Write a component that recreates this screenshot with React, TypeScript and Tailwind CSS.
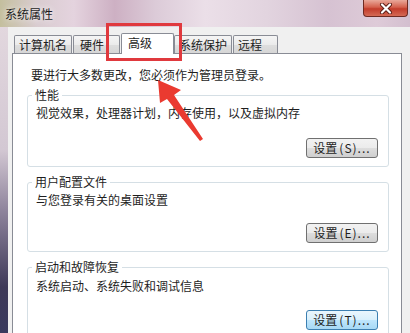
import React from 'react';

const font = { fontFamily: '"Noto Sans CJK SC", "Noto Sans", sans-serif' };

const tabs = [
  { label: '计算机名', cls: 'w-[58px] pl-[4px]' },
  { label: '硬件', cls: 'w-[47px] pl-[6px]' },
  { label: '高级', cls: 'w-[53px] pl-[6px]', active: true },
  { label: '系统保护', cls: 'w-[58px] pl-[4px]' },
  { label: '远程', cls: 'w-[45px] pl-[4px]' },
];

const GroupBox: React.FC<{
  title: string;
  desc: string;
  button: string;
  btnGap: string;
  descPad: string;
  focused?: boolean;
  className?: string;
}> = ({ title, desc, button, btnGap, descPad, focused, className }) => (
  <fieldset className={`border border-[#d5dfe5] rounded-[3px] pl-[4px] pr-[10px] pb-[8px] ${className || ''}`}>
    <legend className="px-[3px] leading-[16px] text-[12px] text-[#1e1e1e]">{title}</legend>
    <div className={`${descPad} ml-[4px] leading-[16px] text-[12px] text-[#1e1e1e]`}>{desc}</div>
    <div className={`flex justify-end ${btnGap}`}>
      <button
        type="button"
        className={`w-[72px] h-[20px] rounded-[3px] border text-[12px] leading-[18px] text-[#1e1e1e] flex items-center justify-center ${
          focused
            ? 'border-[#3c7fb1] bg-[linear-gradient(#eaf6fd,#d9f0fc_50%,#bee6fd_51%,#a7d9f5)]'
            : 'border-[#707070] bg-[linear-gradient(#f2f2f2,#ebebeb_50%,#dddddd_51%,#cfcfcf)]'
        }`}
      >
        <span>设置</span>
        <span className="ml-[2px] tracking-[1px]">{button}</span>
      </button>
    </div>
  </fieldset>
);

export default function App() {
  return (
    <div className="relative w-[410px] h-[333px] overflow-hidden" style={font}>
      {/* glass title bar */}
      <div className="h-[27px] flex justify-between bg-[linear-gradient(90deg,#c4bf9e_0%,#d9ccd0_9%,#e4d3de_18%,#cdb0c3_28%,#dccbd8_38%,#ebdfe8_50%,#e2d4df_65%,#d6c2d2_80%,#decbd8_92%,#d3bfcf_100%)]">
        <div className="pl-[5px] flex items-center text-[12px] text-[#1e1e1e] [text-shadow:0_0_6px_#ffffff]">系统属性</div>
        <div className="mr-[2px] w-[45px] h-[17px] rounded-b-[4px] border border-t-0 border-[#6e2a22] bg-[linear-gradient(#e9a89a,#d4604d_45%,#c23c2b_55%,#d46a55)] flex items-center justify-center">
          <svg width="14" height="11" viewBox="0 0 14 11">
            <path d="M3 1.5 L11 9.5 M11 1.5 L3 9.5" stroke="#5a1d16" strokeWidth="4" strokeLinecap="round" />
            <path d="M3 1.5 L11 9.5 M11 1.5 L3 9.5" stroke="#ffffff" strokeWidth="2.2" strokeLinecap="round" />
          </svg>
        </div>
      </div>

      <div className="flex h-[306px]">
        {/* left frame */}
        <div className="w-[8px] bg-[linear-gradient(#e2d7de,#d3c8d3_40%,#8e849c_60%,#3e3958_85%,#3a3a5e)]" />

        {/* client area */}
        <div className="flex-1 bg-[#f0f0f0] pt-[6px] pl-[4px] pr-[8px]">
          <div className="flex items-end pl-[2px]">
            {tabs.map((t) =>
              t.active ? (
                <div
                  key={t.label}
                  className={`${t.cls} relative z-10 -mb-px h-[21px] bg-white border border-b-0 border-[#898c95] rounded-t-[2px] text-[12px] leading-[18px] text-[#1e1e1e]`}
                >
                  {t.label}
                </div>
              ) : (
                <div
                  key={t.label}
                  className={`${t.cls} h-[18px] mr-px border border-b-0 border-[#898c95] rounded-t-[2px] bg-[linear-gradient(#f5f5f5,#ebebeb_50%,#dedede_51%,#d6d6d6)] text-[12px] leading-[18px] text-[#1e1e1e]`}
                >
                  {t.label}
                </div>
              )
            )}
          </div>

          <div className="border border-[#898c95] bg-white pt-[13px] pl-[14px] pr-[12px] h-[300px]">
            <div className="ml-[4px] text-[12px] leading-[16px] text-[#1e1e1e]">要进行大多数更改，您必须作为管理员登录。</div>
            <GroupBox
              className="mt-[4px]"
              title="性能"
              desc="视觉效果，处理器计划，内存使用，以及虚拟内存"
              button="(S)..."
              descPad="pt-[2px]"
              btnGap="mt-[17px]"
            />
            <GroupBox
              className="mt-[7px]"
              title="用户配置文件"
              desc="与您登录有关的桌面设置"
              button="(E)..."
              descPad="pt-[2px]"
              btnGap="mt-[15px]"
            />
            <GroupBox
              className="mt-[7px]"
              title="启动和故障恢复"
              desc="系统启动、系统失败和调试信息"
              button="(T)..."
              descPad="pt-[3px]"
              btnGap="mt-[16px]"
              focused
            />
          </div>
        </div>
      </div>

      {/* red highlight box */}
      <div className="absolute left-[106px] top-[23px] w-[76px] h-[38px] border-[3px] border-[#e0393e] z-20" />

      {/* red arrow */}
      <svg className="absolute left-0 top-0 z-20" width="410" height="333" viewBox="0 0 410 333">
        <polygon
          points="158,80 181,90 174,95 203,139 200,141 167,99 160,103"
          fill="#ea3a30"
        />
      </svg>
    </div>
  );
}
